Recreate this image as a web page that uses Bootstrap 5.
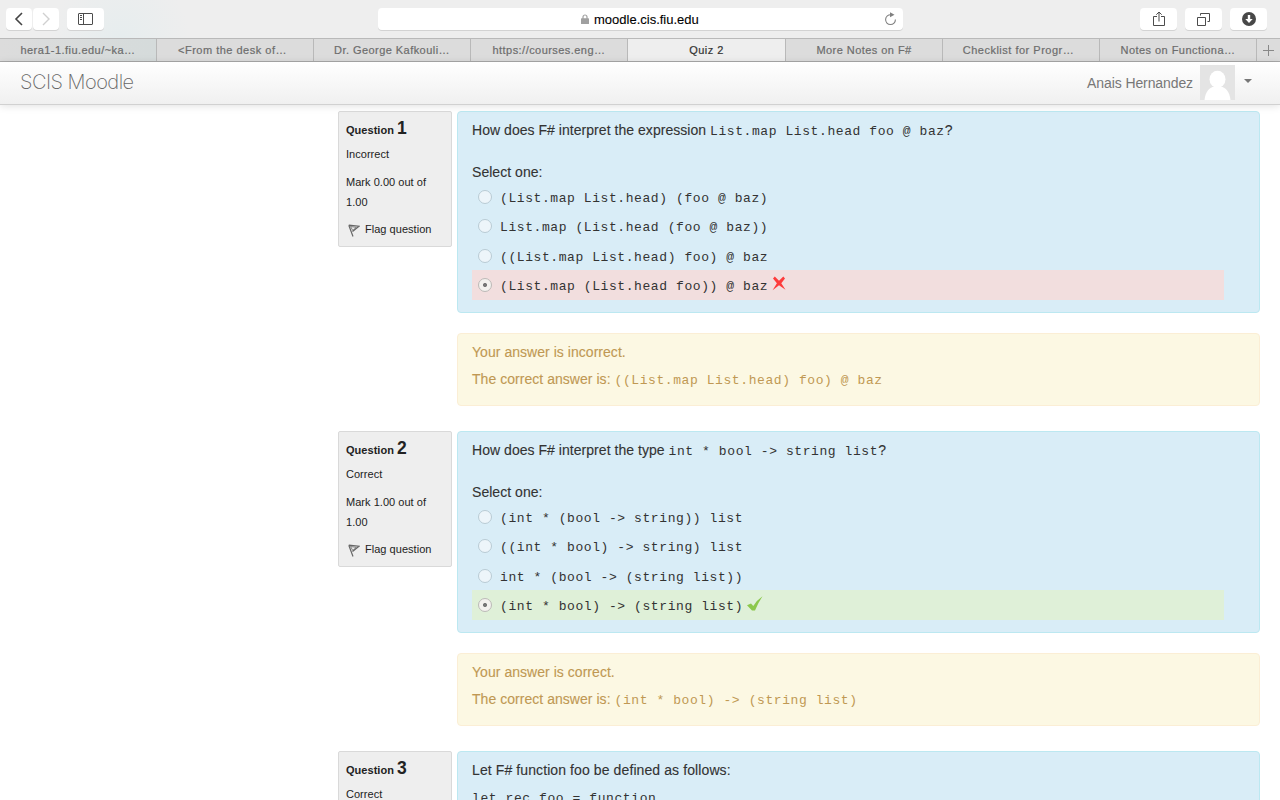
<!DOCTYPE html>
<html lang="en">
<head>
<meta charset="utf-8">
<meta name="viewport" content="width=device-width, initial-scale=1">
<title>Quiz 2</title>
<link href="https://cdn.jsdelivr.net/npm/bootstrap@5.3.0/dist/css/bootstrap.min.css" rel="stylesheet">
<style>
html,body{height:100%;overflow:hidden}
body{font-family:"Liberation Sans",Arial,sans-serif;font-size:14px;line-height:20px;color:#333;background:#fff}
svg{display:block;flex:none}
/* browser window */
.toolbar{height:38px;flex:none;padding:8px 13px 0 6px;background:radial-gradient(circle at 120px 40px,#e6edee 0,#eee 70px)}
.tool{height:22px;background:#fff;border-radius:4px;box-shadow:0 1px 0 #d3d3d3;color:#4c4c4c}
.tool-sm{width:26px}
.tool-sm+.tool-sm{margin-left:1px}
.tool-lg{width:37px}
.address{width:525px;height:22px;margin-left:274px;background:#fff;border-radius:4px;box-shadow:0 1px 0 #d3d3d3;color:#000;font-size:13px;padding-left:203px;padding-right:6px;-webkit-text-stroke:.1px currentColor}
.host{margin-left:5px;padding-top:2px}
.tabs{height:24px;flex:none;background:#dcdcdc;border-top:1px solid #b9b9b9;border-bottom:1px solid #a9a9a9}
.tab{width:157px;border-right:1px solid #b9b9b9;font-size:11px;line-height:22px;color:#6c6c6c;letter-spacing:.45px;-webkit-text-stroke:.2px currentColor;flex:none}
.tab.current{width:158px;background:#eee;color:#333}
.tab-green{background:linear-gradient(90deg,#dcdcdc,#d5dbdb)}
.tab-left{padding-right:5px;letter-spacing:.5px}
/* site header */
.site{height:43px;flex:none;padding:0 28px 0 20px;background:linear-gradient(#fff,#f0f0f0);border-bottom:1px solid #d1d1d1;box-shadow:0 1px 8px rgba(0,0,0,.12);color:#777;position:relative}
.brand{font-family:Inter,"Liberation Sans",sans-serif;font-weight:200;font-size:20px;line-height:20px;letter-spacing:-.52px;color:#666;margin-bottom:2px}
.user{letter-spacing:-.1px}
.avatar{margin-left:7px;margin-bottom:1px}
.caret{margin-left:9px}
/* questions */
.quiz{padding:6px 20px 0 338px;min-height:0}
.question{height:320px}
.info{width:114px;height:136px;background:#eee;border:1px solid #d9d9d9;border-radius:2px;padding:6px 7px;font-size:11px;color:#222;letter-spacing:.03px;flex:none}
.info .no{font-size:17.5px}
.part{margin-left:5px;letter-spacing:.04px}
.formulation,.outcome{-webkit-text-stroke:.12px currentColor}
.formulation code,.outcome code{-webkit-text-stroke:0}
.formulation{height:202px;background:#d9edf7;border:1px solid #bce8f1;border-radius:4px;padding:8px 35px 0 14px}
.outcome{height:73px;margin-top:20px;background:#fcf8e3;border:1px solid #fbeed5;border-radius:4px;padding:8px 14px 0;color:#c09853}
code.src{font-family:"Liberation Mono","Courier New",monospace;font-size:13px;letter-spacing:.58px;color:inherit;line-height:20px;white-space:pre}
.answer{height:29.35px;padding-left:6px}
.answer code{margin-left:8px;padding-top:4px}
.wrong{background:#f2dede}
.right{background:#dff0d8}
.radio{width:14px;height:14px;border:1px solid #b9cbd4;border-radius:50%;background:#edf5fa;flex:none}
.radio.on{border-color:#bcbab8;background:radial-gradient(circle,#777 0,#777 1.6px,#f3f1ee 2.4px)}
.flag{margin-top:7px;padding-left:2px}
.flag span{margin-left:5px}
.flag svg{margin-top:3px}
.select{margin-top:20px;margin-bottom:.4px}
.correct{margin-top:7px}
.intro{letter-spacing:.1px}
.rec{margin-top:9px}
.mark-icon{margin-left:4px;margin-top:-3px}
</style>
</head>
<body class="d-flex flex-column">
<div class="toolbar d-flex">
  <div class="tool tool-sm d-flex align-items-center justify-content-center"><svg width="10" height="14" viewBox="0 0 10 14" fill="none" stroke="#444" stroke-width="1.6"><path d="M8 1 2 7l6 6"/></svg></div>
  <div class="tool tool-sm d-flex align-items-center justify-content-center"><svg width="10" height="14" viewBox="0 0 10 14" fill="none" stroke="#d0d0d0" stroke-width="1.4"><path d="m2 1 6 6-6 6"/></svg></div>
  <div class="tool tool-lg d-flex align-items-center justify-content-center ms-2"><svg width="15" height="12" viewBox="0 0 15 12" fill="none" stroke="#4c4c4c"><rect x=".5" y=".5" width="14" height="11" rx=".5"/><path d="M5.5 1v10M2 2.5h2M2 4.5h2M2 6.5h2"/></svg></div>
  <div class="address d-flex align-items-center">
    <svg width="8" height="10" viewBox="0 0 8 10"><path d="M2 5V3a2 2 0 0 1 4 0v2" fill="none" stroke="#a0a0a0" stroke-width="1.2"/><rect y="4.3" width="8" height="5.7" rx=".6" fill="#a0a0a0"/></svg>
    <span class="host">moodle.cis.fiu.edu</span>
    <svg class="ms-auto" width="13" height="14" viewBox="0 0 13 14"><path d="M7 2.8A4.9 4.9 0 1 0 11.4 7.5" fill="none" stroke="#808080" stroke-width="1.1"/><path d="M6 .3 10.5 2.8 6 5.3z" fill="#808080"/></svg>
  </div>
  <div class="d-flex gap-2 ms-auto">
    <div class="tool tool-lg d-flex align-items-center justify-content-center"><svg width="12" height="16" viewBox="0 0 12 16" fill="none" stroke="#4c4c4c"><path d="M4 5.5H.5v9h11v-9H8M6 10.500V1M3.300 3.700 6 1l2.700 2.700"/></svg></div>
    <div class="tool tool-lg d-flex align-items-center justify-content-center"><svg width="13" height="13" viewBox="0 0 13 13" fill="none" stroke="#4c4c4c"><path d="M.5 4.500h8v8h-8zM3.500 2.500v-2h9v8h-2"/></svg></div>
    <div class="tool tool-lg d-flex align-items-center justify-content-center"><svg width="14" height="14" viewBox="0 0 14 14"><circle cx="7" cy="7" r="7" fill="#484848"/><path d="M5.800 3h2.400v4h2.500L7 11 3.300 7h2.500z" fill="#fff"/></svg></div>
  </div>
</div>
<div class="tabs d-flex text-center">
  <div class="tab tab-green">hera1-1.fiu.edu/~ka…</div>
  <div class="tab tab-left">&lt;From the desk of…</div>
  <div class="tab">Dr. George Kafkouli…</div>
  <div class="tab">https://courses.eng…</div>
  <div class="tab current">Quiz 2</div>
  <div class="tab">More Notes on F#</div>
  <div class="tab tab-left">Checklist for Progr…</div>
  <div class="tab">Notes on Functiona…</div>
  <div class="flex-grow-1 d-flex align-items-center justify-content-center"><svg width="11" height="11" viewBox="0 0 11 11" stroke="#888"><path d="M5.500 0v11M0 5.500h11"/></svg></div>
</div>
<header class="site d-flex align-items-center">
  <div class="brand">SCIS Moodle</div>
  <div class="user ms-auto">Anais Hernandez</div>
  <svg class="avatar" width="35" height="35" viewBox="0 0 35 35"><path fill="#e4e4e4" d="M0 0h35v35H0z"/><ellipse cx="17.500" cy="14.300" rx="8" ry="8.500" fill="#fff"/><path d="M4.500 35c1-9 5-12 9-13.500h8c4 1.500 8 4.500 9 13.500z" fill="#fff"/></svg>
  <svg class="caret" width="8" height="8" viewBox="0 0 8 8"><path d="M0 0h8L4 4z" fill="#777"/></svg>
</header>

<main class="quiz flex-grow-1 overflow-hidden">
  <section class="question d-flex">
    <div class="info">
      <div class="fw-bold">Question <span class="no">1</span></div>
      <div class="mt-1">Incorrect</div>
      <div class="mt-2">Mark 0.00 out of 1.00</div>
      <div class="d-flex align-items-center flag"><svg width="12" height="13" viewBox="0 0 12 13" fill="none" stroke="#666"><path d="M.8 1.200 5 12.500M.8 1.200l10.200 1-6.500 5.300" stroke-width="1.200"/><path d="m2.500 2.500 2.300 4 3.500-3.200z" stroke-width=".8"/></svg><span>Flag question</span></div>
    </div>
    <div class="flex-grow-1 part">
      <div class="formulation">
        <div class="ask">How does F# interpret the expression <code class="src">List.map List.head foo @ baz</code>?</div>
        <div class="select">Select one:</div>
        <div class="answer d-flex align-items-center"><span class="radio"></span><code class="src">(List.map List.head) (foo @ baz)</code></div>
        <div class="answer d-flex align-items-center"><span class="radio"></span><code class="src">List.map (List.head (foo @ baz))</code></div>
        <div class="answer d-flex align-items-center"><span class="radio"></span><code class="src">((List.map List.head) foo) @ baz</code></div>
        <div class="answer wrong d-flex align-items-center"><span class="radio on"></span><code class="src">(List.map (List.head foo)) @ baz</code><svg class="mark-icon" width="14" height="15" viewBox="0 0 14 15"><path d="M2.800.5 7 4.700 11.300.5l1.700 2L9.300 7.200 13.500 13.800 7 9.300.6 14.300 4.900 7.200 1 2.500z" fill="#fd3b3b"/></svg></div>
      </div>
      <div class="outcome">
        <div>Your answer is incorrect.</div>
        <div class="correct">The correct answer is: <code class="src">((List.map List.head) foo) @ baz</code></div>
      </div>
    </div>
  </section>
  <section class="question d-flex">
    <div class="info">
      <div class="fw-bold">Question <span class="no">2</span></div>
      <div class="mt-1">Correct</div>
      <div class="mt-2">Mark 1.00 out of 1.00</div>
      <div class="d-flex align-items-center flag"><svg width="12" height="13" viewBox="0 0 12 13" fill="none" stroke="#666"><path d="M.8 1.200 5 12.500M.8 1.200l10.200 1-6.500 5.300" stroke-width="1.200"/><path d="m2.500 2.500 2.300 4 3.500-3.200z" stroke-width=".8"/></svg><span>Flag question</span></div>
    </div>
    <div class="flex-grow-1 part">
      <div class="formulation">
        <div class="ask">How does F# interpret the type <code class="src">int * bool -&gt; string list</code>?</div>
        <div class="select">Select one:</div>
        <div class="answer d-flex align-items-center"><span class="radio"></span><code class="src">(int * (bool -&gt; string)) list</code></div>
        <div class="answer d-flex align-items-center"><span class="radio"></span><code class="src">((int * bool) -&gt; string) list</code></div>
        <div class="answer d-flex align-items-center"><span class="radio"></span><code class="src">int * (bool -&gt; (string list))</code></div>
        <div class="answer right d-flex align-items-center"><span class="radio on"></span><code class="src">(int * bool) -&gt; (string list)</code><svg class="mark-icon" width="16" height="15" viewBox="0 0 16 15"><path d="M0 9.200 4 7.500l2.300 2.500Q10 4 15.500.3 11 7 8 14.500H5z" fill="#8cc84b"/></svg></div>
      </div>
      <div class="outcome">
        <div>Your answer is correct.</div>
        <div class="correct">The correct answer is: <code class="src">(int * bool) -&gt; (string list)</code></div>
      </div>
    </div>
  </section>
  <section class="question d-flex">
    <div class="info">
      <div class="fw-bold">Question <span class="no">3</span></div>
      <div class="mt-1">Correct</div>
    </div>
    <div class="flex-grow-1 part">
      <div class="formulation">
        <div class="intro">Let F# function foo be defined as follows:</div>
        <code class="src d-block rec">let rec foo = function</code>
      </div>
    </div>
  </section>
</main>
<script src="https://cdn.jsdelivr.net/npm/bootstrap@5.3.0/dist/js/bootstrap.bundle.min.js"></script>
</body>
</html>
